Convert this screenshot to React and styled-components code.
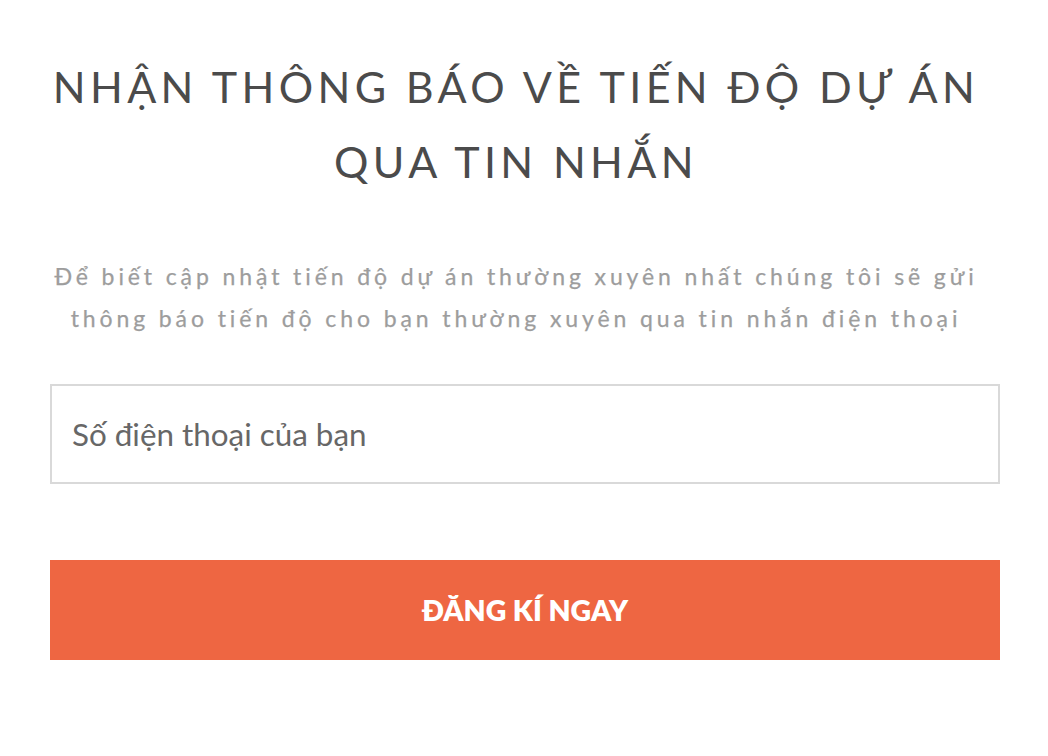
import React from "react";
import styled, { createGlobalStyle } from "styled-components";

const Global = createGlobalStyle`
  html, body { margin: 0; padding: 0; background: #fff; }
  body { font-family: "Lato", sans-serif; }
  * { box-sizing: border-box; }
`;

const Page = styled.div`
  width: 1048px;
  padding: 49px 48px 0 50px;
  display: flex;
  flex-direction: column;
`;

const Title = styled.h2`
  margin: 0 18px 0 0;
  text-align: center;
  font-family: "Lato", sans-serif;
  font-weight: 400;
  font-size: 43px;
  line-height: 75px;
  letter-spacing: 4.35px;
  color: #4b4b4b;
  text-transform: uppercase;
`;

const Lead = styled.p`
  margin: 56px 18px 0 0;
  text-align: center;
  font-family: "Lato", sans-serif;
  font-size: 23px;
  line-height: 42px;
  letter-spacing: 3.9px;
  color: #9d9d9d;
  font-weight: 400;
  -webkit-text-stroke: 0.25px #9d9d9d;
`;

const Form = styled.form`
  display: flex;
  flex-direction: column;
  gap: 76px;
  margin-top: 45px;
`;

const PhoneInput = styled.input`
  width: 950px;
  height: 100px;
  border: 2px solid #d9d9d9;
  padding: 0 20px;
  font-family: "Lato", sans-serif;
  font-size: 31.4px;
  color: #676767;
  outline: none;
  &::placeholder { color: #676767; }
`;

const Submit = styled.button`
  width: 950px;
  height: 100px;
  border: none;
  background: #ee6642;
  color: #fff;
  font-family: "Lato", sans-serif;
  font-weight: 800;
  font-size: 28.5px;
  cursor: pointer;
`;

export default function App() {
  return (
    <>
      <Global />
      <Page>
        <Title>
          Nhận thông báo về tiến độ dự án
          <br />
          qua tin nhắn
        </Title>
        <Lead>
          Để biết cập nhật tiến độ dự án thường xuyên nhất chúng tôi sẽ gửi
          <br />
          thông báo tiến độ cho bạn thường xuyên qua tin nhắn điện thoại
        </Lead>
        <Form onSubmit={(e) => e.preventDefault()}>
          <PhoneInput type="tel" placeholder="Số điện thoại của bạn" />
          <Submit type="submit">ĐĂNG KÍ NGAY</Submit>
        </Form>
      </Page>
    </>
  );
}
